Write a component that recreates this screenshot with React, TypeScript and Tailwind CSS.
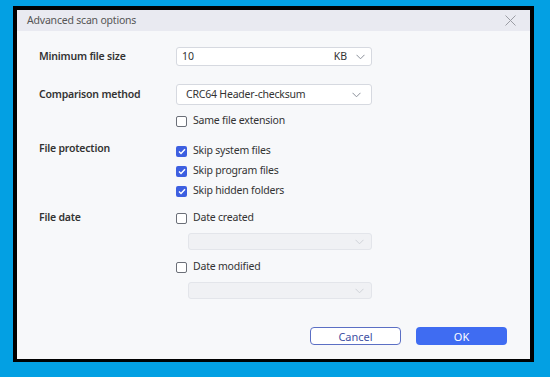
import React from "react";

const Chevron = ({ color = "#8a8f99" }: { color?: string }) => (
  <svg width="9" height="6" viewBox="0 0 9 6" fill="none">
    <path d="M0.5 0.8 L4.5 4.8 L8.5 0.8" stroke={color} strokeWidth="1" />
  </svg>
);

const Box = ({ checked }: { checked?: boolean }) =>
  checked ? (
    <span className="flex h-[11px] w-[11px] items-center justify-center rounded-[2px] bg-[#3d5fe0]">
      <svg width="8" height="7" viewBox="0 0 8 7" fill="none">
        <path d="M1 3.6 L3 5.5 L7 1.2" stroke="#fff" strokeWidth="1.4" />
      </svg>
    </span>
  ) : (
    <span className="h-[11px] w-[11px] rounded-[2px] border border-[#6b6f78] bg-white" />
  );

const Check = ({ label, checked }: { label: string; checked?: boolean }) => (
  <div className="flex h-[20px] items-center gap-[6px]">
    <Box checked={checked} />
    <span className="text-[10.5px] tracking-[-0.2px] text-[#333]">{label}</span>
  </div>
);

const Disabled = () => (
  <div className="ml-[12px] flex h-[17px] w-[184px] items-center justify-end rounded-[3px] border border-[#e3e5ea] bg-[#f0f1f4] pr-[7px]">
    <Chevron color="#cfd2d8" />
  </div>
);

export default function App() {
  return (
    <div
      className="h-[377px] w-[550px] bg-[#03a0e3] pl-[13px] pt-[6px]"
      style={{ fontFamily: '"Noto Sans", "Open Sans", sans-serif' }}
    >
      <div className="flex h-[356px] w-[521px] flex-col border-b-[3px] border-l-4 border-r-4 border-t-4 border-black bg-[#f7f8fa]">
        <div className="flex h-[21px] items-center justify-between bg-[#e9eaf1] pl-[10px] pr-[14px]">
          <span className="text-[10.5px] tracking-[-0.2px] text-[#555]">Advanced scan options</span>
          <svg width="11" height="11" viewBox="0 0 11 11" fill="none">
            <path d="M0.5 0.5 L10.5 10.5 M10.5 0.5 L0.5 10.5" stroke="#9a9ca3" strokeWidth="1" />
          </svg>
        </div>
        <div className="flex flex-col pl-[22px]">
          <div className="mt-[16px] flex h-[19px] items-center">
            <span className="w-[137px] text-[10.5px] font-semibold tracking-[-0.2px] text-[#333]">Minimum file size</span>
            <div className="flex h-[19px] w-[196px] items-center rounded-[3px] border border-[#d6d9e0] bg-white pl-[5px] pr-[6px]">
              <span className="flex-1 text-[10.5px] text-[#333]">10</span>
              <span className="mr-[9px] text-[10.5px] text-[#333]">KB</span>
              <Chevron />
            </div>
          </div>
          <div className="mt-[18px] flex h-[21px] items-center">
            <span className="w-[137px] text-[10.5px] font-semibold tracking-[-0.2px] text-[#333]">Comparison method</span>
            <div className="flex h-[21px] w-[196px] items-center rounded-[3px] border border-[#d6d9e0] bg-white pl-[9px] pr-[10px]">
              <span className="flex-1 text-[10.5px] tracking-[-0.2px] text-[#333]">CRC64 Header-checksum</span>
              <Chevron />
            </div>
          </div>
          <div className="mt-[6px] flex">
            <span className="w-[137px]" />
            <Check label="Same file extension" />
          </div>
          <div className="mt-[10px] flex">
            <span className="w-[137px] text-[10.5px] font-semibold leading-[14px] tracking-[-0.2px] text-[#333]">File protection</span>
            <div className="flex flex-col">
              <Check label="Skip system files" checked />
              <Check label="Skip program files" checked />
              <Check label="Skip hidden folders" checked />
            </div>
          </div>
          <div className="mt-[7px] flex">
            <span className="flex h-[20px] w-[137px] items-center text-[10.5px] font-semibold tracking-[-0.2px] text-[#333]">File date</span>
            <div className="flex flex-col">
              <Check label="Date created" />
              <div className="mt-[5px]">
                <Disabled />
              </div>
              <div className="mt-[7px]">
                <Check label="Date modified" />
              </div>
              <div className="mt-[5px]">
                <Disabled />
              </div>
            </div>
          </div>
        </div>
        <div className="mt-[28px] flex justify-end gap-[15px] pr-[23px]">
          <button className="h-[18px] w-[91px] rounded-[4px] border border-[#5b6fc4] bg-white text-[11px] leading-none text-[#3f51a3]">
            Cancel
          </button>
          <button className="h-[18px] w-[91px] rounded-[4px] bg-[#3f6cf2] text-[11px] leading-none text-white">
            OK
          </button>
        </div>
      </div>
    </div>
  );
}
